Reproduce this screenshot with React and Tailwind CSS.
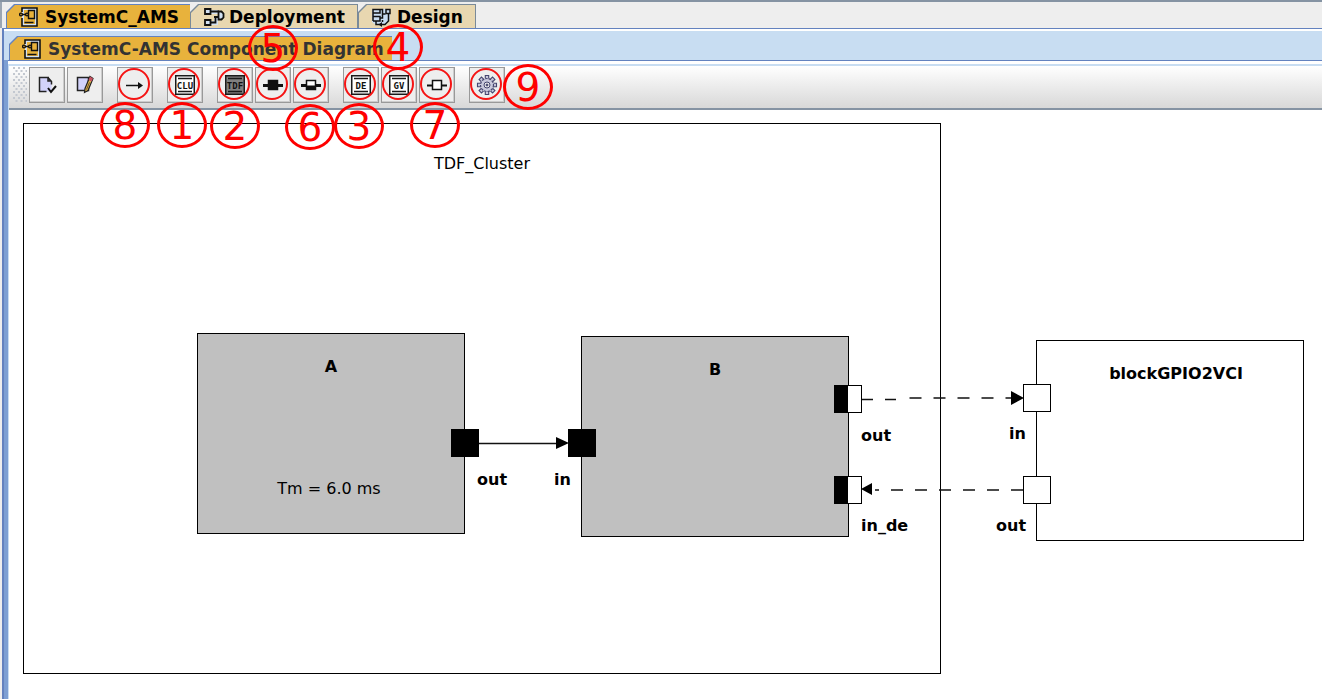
import React from "react";

const TAB_CLIP = "[clip-path:polygon(0_100%,0_8px,8px_0,100%_0,100%_100%)]";

function ComponentTabIcon() {
  return (
    <svg width="20" height="22" viewBox="0 0 20 22" fill="none" aria-hidden="true" className="mr-0.5 shrink-0">
      <path d="M3 2h15v18H3z" fill="#d3e1f3" />
      <path d="M5 4h11v14H5z" fill="#e8b23c" />
      <path d="M3 6V2h15v18H3v-8" stroke="#111" strokeWidth="1.6" />
      <path d="M9.500 4.500h6v8h-6z" fill="#e8b23c" stroke="#111" strokeWidth="1.400" />
      <path d="M5.500 16.500h9M3 8.500h5" stroke="#111" strokeWidth="1.500" />
      <circle cx="2" cy="8.500" r="1.400" fill="#e8b23c" stroke="#111" strokeWidth="1.400" />
      <circle cx="8" cy="8.500" r="1.400" fill="#e8b23c" stroke="#111" strokeWidth="1.400" />
    </svg>
  );
}

function DeploymentTabIcon() {
  return (
    <svg width="22" height="20" viewBox="0 0 22 20" fill="none" stroke="#111" strokeWidth="1.800" aria-hidden="true" className="shrink-0">
      <path d="M8 5h7M8 16h5v-5h3" stroke="#d3e1f3" strokeWidth="4" />
      <path d="M8 4.500h8M8 15.500h4.500V10M11 10h5" />
      <g fill="#d3e1f3">
        <path d="M2 2h5.500v5H2zM2 13h5.500v5H2z" />
        <path d="M15.500 4.500h3l2 2v4l-2 2h-3z" />
      </g>
    </svg>
  );
}

function DesignTabIcon() {
  return (
    <svg width="22" height="20" viewBox="0 0 22 20" fill="none" stroke="#111" strokeWidth="1.500" aria-hidden="true" className="shrink-0">
      <path d="M1 2h18v10l-4 6H5l-4-3z" fill="#c8ddf2" stroke="none" />
      <path d="M2 2.500h7v3.500H2zM2 6v8M2 9.500h7v4.500H2M9 2.500h2.500V11H9M5 14v3.500h9l3.500-3.500V7M11.500 7h3M11.500 13v2" />
      <path d="M15 2.500h4v4h-4z" />
      <path d="M11 15l-3.500 2.500L11 20z" fill="#111" stroke="none" />
    </svg>
  );
}

function CheckSyntaxIcon() {
  return (
    <svg width="20" height="20" viewBox="0 0 20 20" fill="none" aria-hidden="true">
      <path d="M2.500 2.500h9l3 4v10h-12z" fill="#d2d2fa" />
      <path d="M12 2.500H2.500v14h7M11 2.500l3.500 4v3M11 2.500V6h3.500" stroke="#222" strokeWidth="1.500" />
      <path d="M11 13l3 4 5-6" stroke="#111" strokeWidth="2" />
    </svg>
  );
}

function EditIcon() {
  return (
    <svg width="20" height="20" viewBox="0 0 20 20" fill="none" aria-hidden="true">
      <path d="M2.500 2.500h11v13h-11z" fill="#d2d2fa" stroke="#222" strokeWidth="1.500" />
      <path d="M15 1.500l3 2-5 12-3.500 2 .5-4z" fill="#e5b94c" stroke="#222" strokeWidth="1.200" />
      <path d="M15 1.500l3 2-1.500 3-3-1.500z" fill="#c65362" />
      <path d="M14.500 7.500l-3 7" stroke="#6b4a20" />
    </svg>
  );
}

function ArrowIcon() {
  return (
    <svg width="20" height="20" viewBox="0 0 20 20" aria-hidden="true">
      <path d="M1 10.500h15" stroke="#111" strokeWidth="1.500" />
      <path d="M13 7l5 3.500-5 3.500z" fill="#111" />
    </svg>
  );
}

function LabelIcon({ label, dark = false }) {
  return (
    <svg width="20" height="20" viewBox="0 0 20 20" aria-hidden="true">
      <path d="M.75.750h18.500v18.500H.75z" fill={dark ? "#808080" : "#fff"} stroke="#1a1a1a" strokeWidth="1.500" />
      <path d="M3 3.500h14M3 16.500h14" stroke="#1a1a1a" strokeWidth="1.500" />
      <text x="10" y="13.500" textAnchor="middle" fontFamily="DejaVu Sans Mono, monospace" fontWeight="bold" fontSize="9" fill="#111">
        {label}
      </text>
    </svg>
  );
}

function PortIcon({ kind }) {
  return (
    <svg width="22" height="20" viewBox="0 0 22 20" aria-hidden="true">
      <path d="M1 10.500h20" stroke="#111" strokeWidth={kind === "de" ? 2 : 3} />
      <path d="M6.500 5.500h9v9h-9z" fill={kind === "tdf" ? "#111" : "#fff"} stroke="#111" strokeWidth="1.500" />
      {kind === "converter" && <path d="M6 10.500h10v4.500H6z" fill="#111" />}
    </svg>
  );
}

function GearIcon() {
  const teeth = [0, 45, 90, 135, 180, 225, 270, 315];
  return (
    <svg width="22" height="22" viewBox="0 0 22 22" fill="none" stroke="#45456f" aria-hidden="true">
      {teeth.map((angle) => (
        <path key={angle} d="M9.300 4.500V1.500h3.400v3" transform={`rotate(${angle} 11 11)`} fill="#c9c9dc" strokeWidth="1.100" />
      ))}
      <circle cx="11" cy="11" r="6.500" fill="#c9c9dc" strokeWidth="1.200" strokeDasharray="2.500 1" />
      <circle cx="11" cy="11" r="3" fill="#eee" />
      <circle cx="11" cy="11" r="1" fill="#45456f" />
    </svg>
  );
}

function Tab({ icon, children, selected = false, className = "" }) {
  return (
    <button
      type="button"
      role="tab"
      aria-selected={selected}
      className={`flex h-6 pt-px pl-px ${TAB_CLIP} ${selected ? "bg-[#6382bf]" : "bg-[#7a8a99]"} ${className}`}
    >
      <span className={`flex h-full w-full items-center gap-1 whitespace-nowrap pl-3 ${TAB_CLIP} ${selected ? "bg-[#e8b23c]" : "border-r border-[#7a8a99] bg-[#e8d7b0]"}`}>
        {icon}
        {children}
      </span>
    </button>
  );
}

function ToolButton({ label, marked = false, children }) {
  return (
    <button
      type="button"
      aria-label={label}
      className="relative flex size-9 shrink-0 items-center justify-center border border-[#999] bg-[#eee] shadow-[inset_-1px_-1px_0_#ccc]"
    >
      {children}
      {marked && <span className="absolute top-0 left-0 size-8 rounded-full border-2 border-[#f51414]" />}
    </button>
  );
}

function Marker({ number, className }) {
  return (
    <div className={`absolute flex h-[46px] w-[50px] items-center justify-center rounded-[50%] border-3 border-[#ff0000] text-[39px] leading-none text-[#ff0000] ${className}`}>
      {number}
    </div>
  );
}

function Block({ title, className, titleClass = "", children }) {
  return (
    <section className={`absolute h-[201px] w-[268px] border border-black ${className}`}>
      <h2 className={`text-center text-base leading-5 font-bold ${titleClass}`}>{title}</h2>
      {children}
    </section>
  );
}

function Port({ kind, className }) {
  return (
    <div className={`absolute flex size-7 border border-black ${kind === "tdf" ? "bg-black" : "bg-white"} ${className}`}>
      {kind === "converter" && <span className="h-full w-[13px] border-r border-black bg-black" />}
    </div>
  );
}

function PortLabel({ children, className }) {
  return <span className={`absolute text-base leading-5 font-bold whitespace-nowrap ${className}`}>{children}</span>;
}

function Diagram() {
  return (
    <main className="relative min-h-[589px] flex-1 overflow-hidden bg-white">
      <section className="absolute top-[13px] left-[14px] h-[551px] w-[918px] border border-black">
        <h2 className="pt-[30px] text-center text-base leading-5">TDF_Cluster</h2>
      </section>
      <Block title="A" className="top-[223px] left-[188px] bg-[#c0c0c0]" titleClass="pt-[23px]">
        <p className="pt-[102px] pr-1 text-center text-base leading-5">Tm = 6.0 ms</p>
      </Block>
      <Block title="B" className="top-[226px] left-[572px] bg-[#c0c0c0]" titleClass="pt-[23px]" />
      <Block title="blockGPIO2VCI" className="top-[230px] left-[1027px] bg-white" titleClass="pt-[23px] pl-3" />
      <svg className="absolute top-0 left-0" width="1100" height="420" aria-hidden="true">
        <g stroke="#111" strokeWidth="1.300" fill="none">
          <path d="M469 333.500h81" />
          <path d="M853 289.500h38" strokeDasharray="11 12" />
          <path d="M900.500 288h114" strokeDasharray="12 12" />
          <path d="M1014 380H866" strokeDasharray="12 12" />
        </g>
        <path d="M547 327l13 6-13 6zM1002 281l13 7-13 7zM863 373l-11 6 11 6z" />
      </svg>
      <Port kind="tdf" className="top-[319px] left-[442px]" />
      <Port kind="tdf" className="top-[319px] left-[559px]" />
      <Port kind="converter" className="top-[275px] left-[825px]" />
      <Port kind="converter" className="top-[366px] left-[825px]" />
      <Port kind="de" className="top-[274px] left-[1014px]" />
      <Port kind="de" className="top-[366px] left-[1014px]" />
      <PortLabel className="top-[360px] left-[468px]">out</PortLabel>
      <PortLabel className="top-[360px] left-[545px]">in</PortLabel>
      <PortLabel className="top-[316px] left-[852px]">out</PortLabel>
      <PortLabel className="top-[406px] left-[852px]">in_de</PortLabel>
      <PortLabel className="top-[314px] left-[1000px]">in</PortLabel>
      <PortLabel className="top-[406px] left-[987px]">out</PortLabel>
    </main>
  );
}

export default function App() {
  return (
    <div className="relative flex min-h-screen flex-col overflow-hidden border-t-2 border-[#8593a3] bg-[#eee] font-['DejaVu_Sans',sans-serif] text-black">
      <div className="flex h-[26px] shrink-0 border-l-2 border-[#9aa5b3] pt-0.5 pl-1 text-[17px] leading-5 font-bold" role="tablist" aria-label="Models">
        <Tab icon={<ComponentTabIcon />} selected className="w-[184px]">SystemC_AMS</Tab>
        <Tab icon={<DeploymentTabIcon />} className="w-[168px]">Deployment</Tab>
        <Tab icon={<DesignTabIcon />} className="w-[118px]">Design</Tab>
      </div>
      <div className="ml-0.5 flex flex-1 flex-col border-t border-l-2 border-[#6382bf] bg-[#c8ddf2]">
        <div className="flex h-[31px] shrink-0 items-end border-t-2 border-white pl-[5px] text-[17px] leading-5 font-bold text-[#333]" role="tablist" aria-label="Diagrams">
          <Tab icon={<ComponentTabIcon />} selected className="w-[383px]">SystemC-AMS Component Diagram</Tab>
        </div>
        <div className="flex flex-1 flex-col border-l-4 border-[#7d9fd3] shadow-[inset_1px_0_0_#c8ddf2]">
          <div className="h-1.5 shrink-0 border-t border-b-2 border-t-[#6382bf] border-b-[#c8ddf2] bg-white" />
          <div className="ml-px flex h-11 shrink-0 gap-0.5 border-b-2 border-[#8593a3] bg-linear-to-b from-white to-[#d8d8d8] pt-px pl-1" role="toolbar" aria-label="Diagram tools">
            <svg width="14" height="36" aria-hidden="true">
              <defs>
                <pattern id="grip" width="5" height="6" patternUnits="userSpaceOnUse">
                  <path d="M0 0h2v2H0zM2.500 3h2v2h-2z" fill="#c3c8d0" />
                </pattern>
              </defs>
              <rect width="14" height="36" fill="url(#grip)" />
            </svg>
            <ToolButton label="Check syntax"><CheckSyntaxIcon /></ToolButton>
            <ToolButton label="Edit"><EditIcon /></ToolButton>
            <span className="w-2.5" />
            <ToolButton label="Connector" marked><ArrowIcon /></ToolButton>
            <span className="w-2.5" />
            <ToolButton label="Cluster" marked><LabelIcon label="CLU" /></ToolButton>
            <span className="w-2.5" />
            <ToolButton label="TDF block" marked><LabelIcon label="TDF" dark /></ToolButton>
            <ToolButton label="TDF port" marked><PortIcon kind="tdf" /></ToolButton>
            <ToolButton label="Converter port" marked><PortIcon kind="converter" /></ToolButton>
            <span className="w-2.5" />
            <ToolButton label="DE block" marked><LabelIcon label="DE" /></ToolButton>
            <ToolButton label="GPIO block" marked><LabelIcon label="GV" /></ToolButton>
            <ToolButton label="DE port" marked><PortIcon kind="de" /></ToolButton>
            <span className="w-2.5" />
            <ToolButton label="Generate code" marked><GearIcon /></ToolButton>
          </div>
          <div className="ml-px flex flex-1 flex-col">
            <Diagram />
          </div>
        </div>
      </div>
      <Marker number="8" className="top-[100px] left-[100px]" />
      <Marker number="1" className="top-[100px] left-[157px]" />
      <Marker number="2" className="top-[101px] left-[210px]" />
      <Marker number="6" className="top-[102px] left-[285px]" />
      <Marker number="3" className="top-[101px] left-[334px]" />
      <Marker number="7" className="top-[100px] left-[410px]" />
      <Marker number="5" className="top-[23px] left-[248px]" />
      <Marker number="4" className="top-[22px] left-[373px]" />
      <Marker number="9" className="top-[62px] left-[503px]" />
    </div>
  );
}
